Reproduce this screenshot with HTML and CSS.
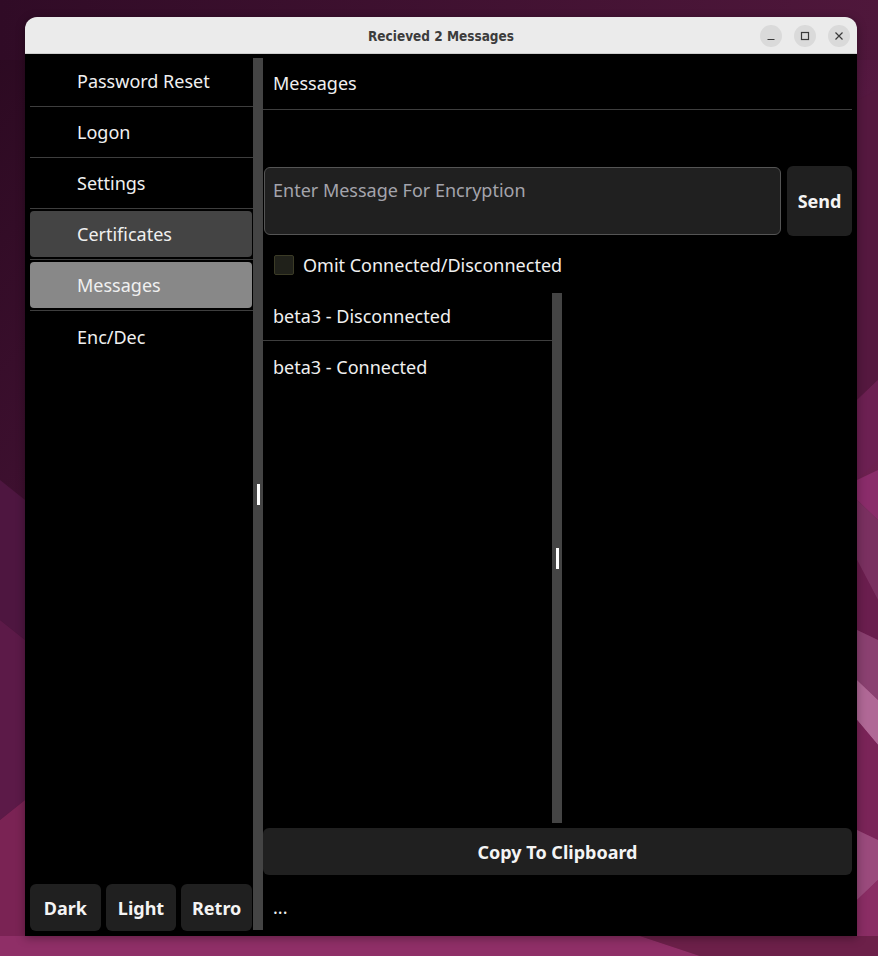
FILE: index.html
```html
<!DOCTYPE html>
<html lang="en">
<head>
<meta charset="utf-8">
<title>Recieved 2 Messages</title>
<link rel="stylesheet" href="styles.css">
</head>
<body>
<svg class="wallpaper" width="878" height="956" viewBox="0 0 878 956" xmlns="http://www.w3.org/2000/svg">
  <defs>
    <linearGradient id="bg" x1="0" y1="0" x2="1" y2="1">
      <stop offset="0" stop-color="#2a0920"/>
      <stop offset="0.45" stop-color="#4a1439"/>
      <stop offset="1" stop-color="#8a2b63"/>
    </linearGradient>
    <linearGradient id="top" x1="0" y1="0" x2="1" y2="0">
      <stop offset="0" stop-color="#300b26"/>
      <stop offset="1" stop-color="#4f173b"/>
    </linearGradient>
  </defs>
  <rect width="878" height="956" fill="url(#bg)"/>
  <rect width="878" height="60" fill="url(#top)"/>
  <polygon points="0,480 25,500 25,640 0,620" fill="#4e1640"/>
  <polygon points="0,620 25,640 25,800 0,820" fill="#5c1a48"/>
  <polygon points="0,820 25,800 25,956 0,956" fill="#7a2354"/>
  <polygon points="857,100 878,90 878,380 857,400" fill="#55183f"/>
  <polygon points="857,400 878,380 878,460 857,480" fill="#6c2052"/>
  <polygon points="857,480 878,470 878,520 857,500" fill="#8a2c6a"/>
  <polygon points="857,500 878,520 878,600 857,560" fill="#7a3060"/>
  <polygon points="857,560 878,600 878,640 857,630" fill="#6a1e4e"/>
  <polygon points="857,630 878,640 878,700 857,680" fill="#8a4070"/>
  <polygon points="857,680 878,700 878,745 857,720" fill="#b06896"/>
  <polygon points="857,720 878,745 878,840 857,830" fill="#7a2458"/>
  <polygon points="857,830 878,840 878,880 857,900" fill="#9a4a7c"/>
  <polygon points="857,900 878,880 878,956 857,956" fill="#8a2d64"/>
  <polygon points="0,936 640,936 700,956 0,956" fill="#8f2f67"/>
  <polygon points="640,936 878,936 878,956 700,956" fill="#6c2049"/>
</svg>

<div class="window">
  <header class="titlebar">
    <span class="title">Recieved 2 Messages</span>
    <div class="wm-buttons">
      <span class="wm-btn">
        <svg width="10" height="10" viewBox="0 0 10 10"><path d="M1.5 8.5h7" stroke="#3a3a3a" stroke-width="1.2" fill="none"/></svg>
      </span>
      <span class="wm-btn">
        <svg width="10" height="10" viewBox="0 0 10 10"><rect x="1.5" y="1.5" width="7" height="7" stroke="#3a3a3a" stroke-width="1.2" fill="none"/></svg>
      </span>
      <span class="wm-btn">
        <svg width="10" height="10" viewBox="0 0 10 10"><path d="M1.5 1.5l7 7M8.5 1.5l-7 7" stroke="#3a3a3a" stroke-width="1.2" fill="none"/></svg>
      </span>
    </div>
  </header>

  <div class="content">
    <aside class="sidebar">
      <nav class="nav">
        <div class="nav-item"><div class="nav-inner">Password Reset</div></div>
        <div class="nav-item"><div class="nav-inner">Logon</div></div>
        <div class="nav-item"><div class="nav-inner">Settings</div></div>
        <div class="nav-item"><div class="nav-inner hover">Certificates</div></div>
        <div class="nav-item"><div class="nav-inner active">Messages</div></div>
        <div class="nav-item last"><div class="nav-inner">Enc/Dec</div></div>
      </nav>
      <div class="theme-buttons">
        <button class="btn theme-btn">Dark</button>
        <button class="btn theme-btn">Light</button>
        <button class="btn theme-btn">Retro</button>
      </div>
    </aside>

    <div class="splitter"><span class="grip"></span></div>

    <main class="pane">
      <div class="pane-header">Messages</div>
      <div class="compose">
        <div class="input">Enter Message For Encryption</div>
        <button class="btn send">Send</button>
      </div>
      <label class="check-row"><span class="checkbox"></span>Omit Connected/Disconnected</label>
      <div class="list-area">
        <div class="list">
          <div class="list-item">beta3 - Disconnected</div>
          <div class="list-item">beta3 - Connected</div>
        </div>
        <div class="scrollbar"><span class="grip"></span></div>
      </div>
      <button class="btn copy">Copy To Clipboard</button>
      <div class="status">...</div>
    </main>
  </div>
</div>
</body>
</html>
```

FILE: styles.css
```css
* {
  box-sizing: border-box;
}

html, body {
  margin: 0;
  padding: 0;
  width: 878px;
  height: 956px;
  overflow: hidden;
}

body {
  position: relative;
  font-family: "Noto Sans", "Open Sans", sans-serif;
  font-size: 18px;
  color: #f0f0f0;
  background: #3a0f2e;
}

.wallpaper {
  position: absolute;
  left: 0;
  top: 0;
  z-index: 0;
}

.window {
  position: relative;
  z-index: 1;
  margin: 17px 0 0 25px;
  width: 832px;
  height: 919px;
  border-radius: 12px 12px 0 0;
  overflow: hidden;
  display: flex;
  flex-direction: column;
  box-shadow: 0 2px 10px rgba(0, 0, 0, 0.35);
}

.titlebar {
  height: 37px;
  flex: none;
  background: #ebebeb;
  border-bottom: 1px solid #cfcfcf;
  display: flex;
  align-items: center;
  justify-content: center;
  position: relative;
}

.title {
  font-family: "DejaVu Sans Condensed", "DejaVu Sans", sans-serif;
  font-weight: bold;
  font-size: 13.5px;
  color: #3c3c3c;
  margin-top: 1px;
}

.wm-buttons {
  position: absolute;
  right: 7px;
  top: 8px;
  display: flex;
  gap: 12px;
}

.wm-btn {
  width: 22px;
  height: 22px;
  border-radius: 50%;
  background: #dadada;
  display: flex;
  align-items: center;
  justify-content: center;
}

.content {
  flex: 1;
  background: #000;
  display: flex;
  padding: 2px 5px 5px 5px;
  min-height: 0;
}

/* Sidebar */
.sidebar {
  width: 223px;
  flex: none;
  display: flex;
  flex-direction: column;
  justify-content: space-between;
}

.nav {
  display: flex;
  flex-direction: column;
}

.nav-item {
  height: 51px;
  border-bottom: 1px solid #3e3e3e;
  padding: 2px 1px 2px 0;
  display: flex;
}

.nav-item.last {
  border-bottom: none;
}

.nav-inner {
  flex: 1;
  display: flex;
  align-items: center;
  padding-left: 47px;
  border-radius: 4px;
  color: #f0f0f0;
}

.nav-inner.hover {
  background: #444444;
}

.nav-inner.active {
  background: #888888;
}

.btn {
  font-family: "Noto Sans", "Open Sans", sans-serif;
  font-weight: bold;
  font-size: 18px;
  color: #f4f4f4;
  background: #202020;
  border: none;
  border-radius: 6px;
  padding: 0;
  margin: 0;
}

.theme-buttons {
  display: flex;
  gap: 5px;
  height: 47px;
  padding-right: 1px;
}

.theme-btn {
  flex: 1;
}

/* Splitter */
.splitter {
  width: 10px;
  flex: none;
  background: #444444;
  margin: 2px 0 1px 0;
  display: flex;
  align-items: center;
  justify-content: center;
}

.grip {
  width: 3px;
  height: 21px;
  background: #ffffff;
  margin-left: 1px;
}

/* Right pane */
.pane {
  flex: 1;
  display: flex;
  flex-direction: column;
  min-width: 0;
}

.pane-header {
  height: 54px;
  flex: none;
  border-bottom: 1px solid #3e3e3e;
  padding-left: 10px;
  display: flex;
  align-items: center;
}

.compose {
  margin-top: 56px;
  height: 70px;
  flex: none;
  display: flex;
  gap: 6px;
}

.input {
  flex: 1;
  margin: 1px 0 1px 1px;
  background: #202020;
  border: 1px solid #555555;
  border-radius: 6px;
  padding: 9px 8px;
  line-height: 26px;
  color: #a4a4ac;
}

.send {
  width: 65px;
  flex: none;
}

.check-row {
  margin-top: 8px;
  height: 42px;
  flex: none;
  display: flex;
  align-items: center;
  padding-left: 11px;
  gap: 9px;
}

.checkbox {
  width: 20px;
  height: 20px;
  background: #20211a;
  border: 1px solid #3b3b26;
  border-radius: 2px;
}

.list-area {
  margin-top: 7px;
  flex: 1;
  display: flex;
  width: 299px;
  min-height: 0;
}

.list {
  flex: 1;
}

.list-item {
  padding: 10px 10px 11px;
  line-height: 26px;
  border-bottom: 1px solid #3e3e3e;
}

.list-item:last-child {
  border-bottom: none;
  padding-top: 13px;
}

.scrollbar {
  width: 10px;
  flex: none;
  background: #444444;
  display: flex;
  align-items: center;
  justify-content: center;
}

.scrollbar .grip {
  margin-left: 1px;
}

.copy {
  margin-top: 5px;
  height: 47px;
  flex: none;
  width: 100%;
}

.status {
  height: 56px;
  flex: none;
  padding: 20px 0 0 10px;
  line-height: 25px;
}
```
